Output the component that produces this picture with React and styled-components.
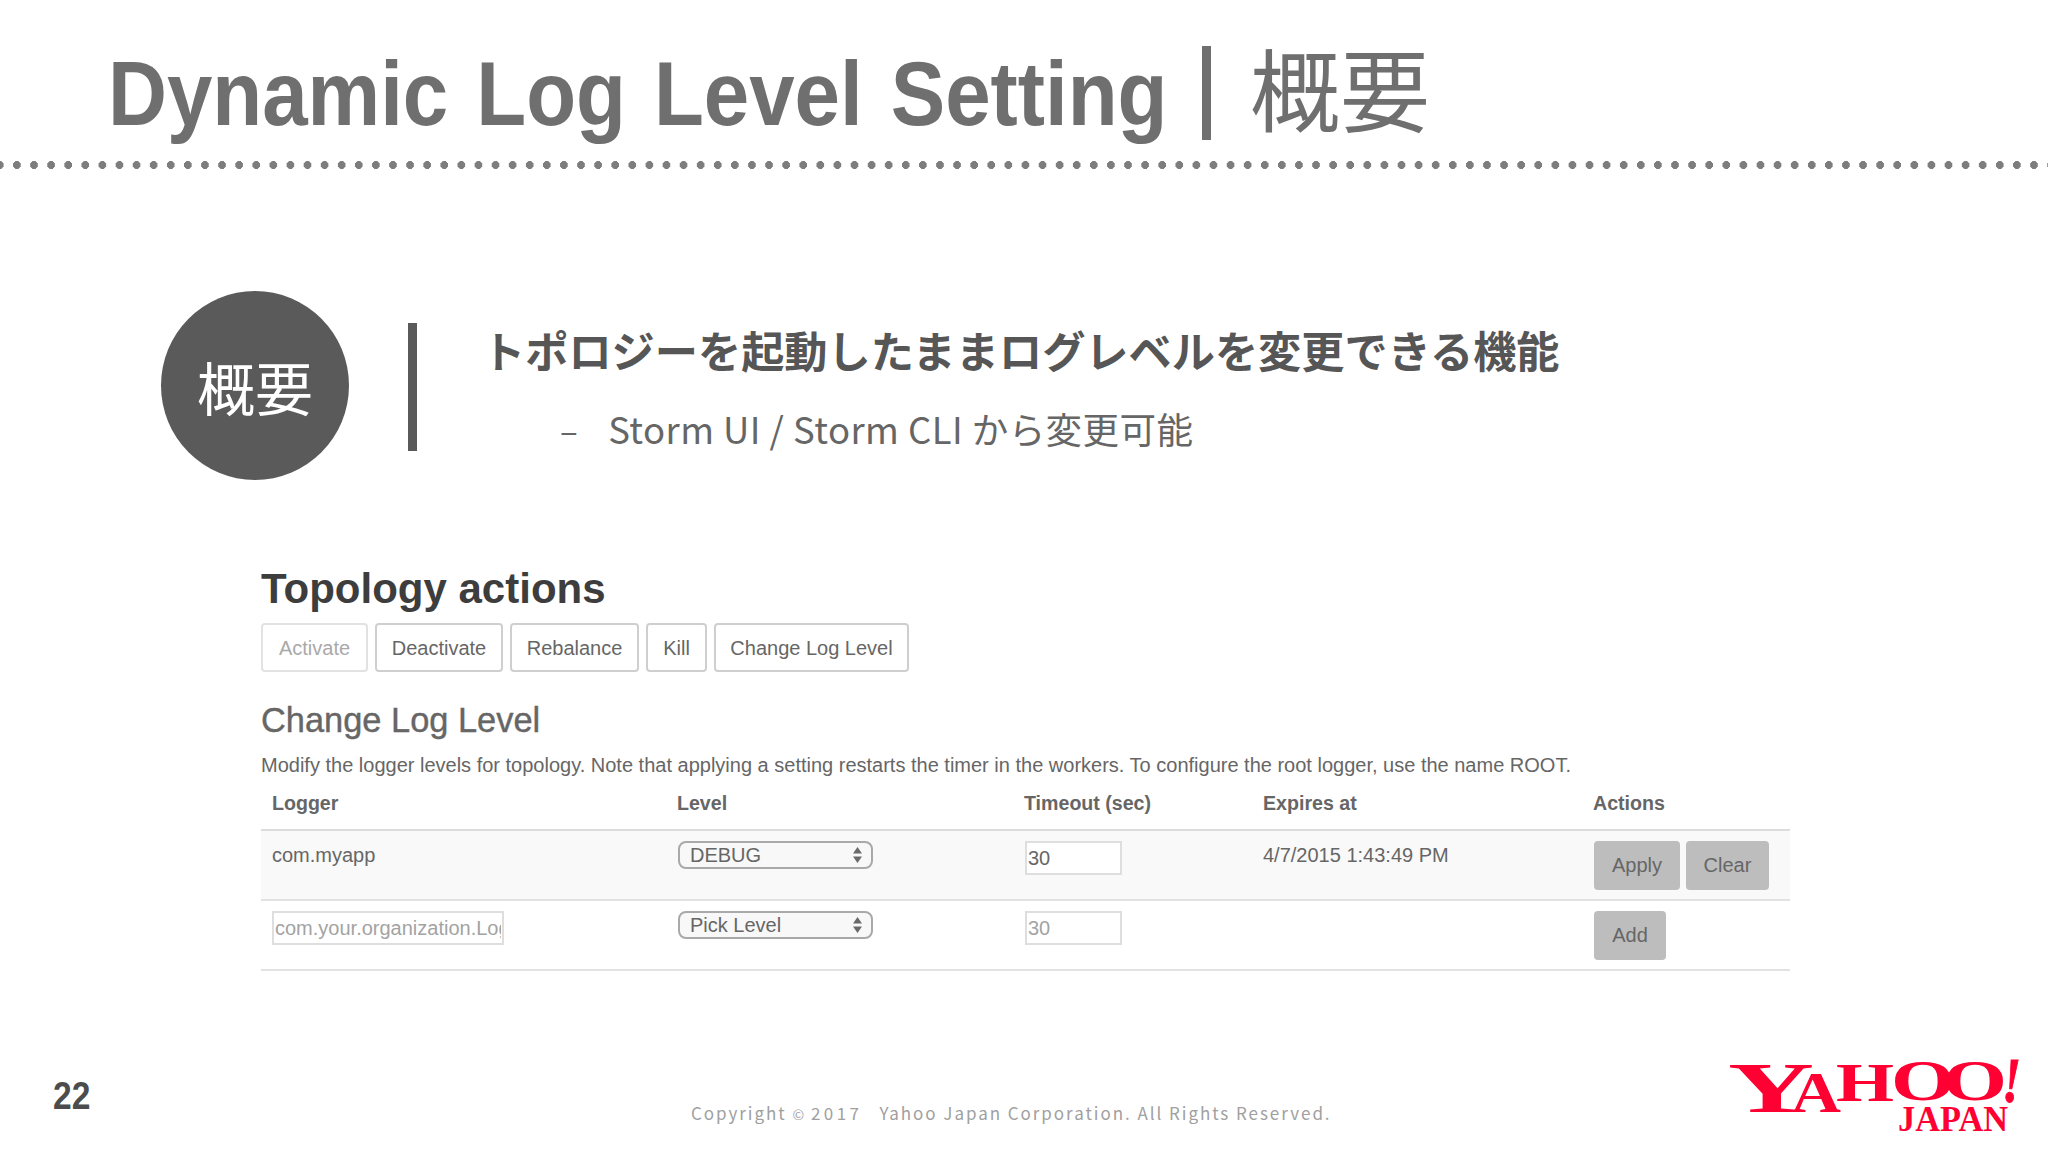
import React from "react";
import styled, { createGlobalStyle } from "styled-components";

const SANS = `"Liberation Sans", Arial, sans-serif`;
const JP = `"Noto Sans CJK JP", "Noto Sans", sans-serif`;

const COLUMNS = "405px 347px 239px 330px 1fr";
const BUTTONS = [
  { label: "Activate", width: 107, disabled: true },
  { label: "Deactivate", width: 128 },
  { label: "Rebalance", width: 129 },
  { label: "Kill", width: 61 },
  { label: "Change Log Level", width: 195 }
];
const HEADERS = ["Logger", "Level", "Timeout (sec)", "Expires at", "Actions"];

const Global = createGlobalStyle`
  html, body { margin: 0; padding: 0; background: #fff; }
  * { box-sizing: border-box; }
`;

const Page = styled.div`
  width: 2048px;
  height: 1152px;
  overflow: hidden;
  display: flex;
  flex-direction: column;
  background: #fff;
`;

const Title = styled.h1`
  margin: 0;
  height: 161px;
  padding: 31px 0 0 108px;
  font: 700 91px/110px ${SANS};
  color: #6f6f6f;
  white-space: nowrap;
`;

const TitleLatin = styled.span`
  display: inline-block;
  transform: scaleX(0.897);
  transform-origin: left center;
  margin-right: -121px;
  word-spacing: 6px;
`;

const TitleBar = styled.span`
  display: inline-block;
  width: 9px;
  height: 94px;
  margin: 0 39px 0 34px;
  background: #6f6f6f;
  vertical-align: -15px;
`;

const TitleJp = styled.span`
  font: 400 90px/110px ${JP};
`;

const Dots = styled.div`
  height: 8px;
  background-image: radial-gradient(ellipse 4px 4px at 4px 4px, #7d7d7d 96%, transparent 100%);
  background-size: 17.1px 8px;
  background-position: -4px 0;
  background-repeat: repeat-x;
`;

const Overview = styled.section`
  margin-top: 122px;
  padding-left: 161px;
  display: flex;
  align-items: center;
`;

const Circle = styled.div`
  width: 188px;
  height: 189px;
  border-radius: 50%;
  background: #5a5a5a;
  color: #fff;
  display: flex;
  align-items: center;
  justify-content: center;
  font: 400 58px/1 ${JP};
`;

const Bar = styled.div`
  width: 9px;
  height: 128px;
  margin: 2px 0 0 59px;
  background: #5a5a5a;
`;

const OverviewText = styled.div`
  margin-left: 65px;
  display: flex;
  flex-direction: column;
  gap: 25px;
`;

const Lead = styled.div`
  font: 700 43.2px/62px ${JP};
  color: #565656;
  white-space: nowrap;
`;

const Sub = styled.div`
  display: flex;
  padding-left: 78px;
  gap: 30px;
  font: 400 36.5px/48px ${JP};
  letter-spacing: 0.45px;
  color: #666;
  white-space: nowrap;
`;

const Dash = styled.span`
  font-size: 33px;
`;

const Panel = styled.section`
  margin: 86px 0 0 261px;
  width: 1529px;
`;

const PanelTitle = styled.h2`
  margin: 0;
  font: 700 42px/46px ${SANS};
  color: #3d3d3d;
`;

const ButtonRow = styled.div`
  display: flex;
  gap: 7px;
  margin-top: 11px;
`;

const ActionButton = styled.button`
  width: ${p => p.$width}px;
  height: 49px;
  padding: 0;
  background: #fff;
  border: 2px solid ${p => (p.disabled ? "#e2e2e2" : "#cfcfcf")};
  border-radius: 4px;
  font: 400 20px/1 ${SANS};
  color: ${p => (p.disabled ? "#a9a9a9" : "#666")};
`;

const SectionTitle = styled.h3`
  margin: 28px 0 0;
  font: 400 34.4px/40px ${SANS};
  -webkit-text-stroke: 0.4px #666;
  color: #666;
`;

const Description = styled.p`
  margin: 13px 0 0;
  font: 400 20px/24px ${SANS};
  color: #666;
  white-space: nowrap;
`;

const Row = styled.div`
  display: grid;
  grid-template-columns: ${COLUMNS};
  height: ${p => p.$height}px;
  padding-left: 11px;
  background: ${p => (p.$shaded ? "#f9f9f9" : "#fff")};
  border-bottom: 2px solid #e2e2e2;
`;

const HeadRow = styled(Row)`
  align-items: center;
  border-bottom-color: #dcdcdc;
`;

const HeadCell = styled.div`
  font: 700 19.6px/24px ${SANS};
  color: #666;
`;

const Cell = styled.div`
  padding-top: 10px;
  font: 400 20px/24px ${SANS};
  color: #666;
`;

const TextCell = styled(Cell)`
  padding-top: 12px;
`;

const Select = styled.div`
  width: 195px;
  height: 28px;
  padding: 0 9px 0 10px;
  margin-left: 1px;
  display: flex;
  align-items: center;
  justify-content: space-between;
  border: 2px solid #a9a9a9;
  border-radius: 8px;
  background: #f8f8f8;
  font: 400 20px/1 ${SANS};
  color: #666;
`;

const Field = styled.input`
  display: block;
  width: ${p => p.$width}px;
  height: 34px;
  margin-left: ${p => p.$inset || 0}px;
  padding: 0 1px;
  background: #fff;
  border: 2px solid #dedede;
  border-radius: 0;
  outline: none;
  font: 400 20px/1 ${SANS};
  color: #666;
  &::placeholder { color: #a3a3a3; opacity: 1; }
`;

const ButtonCell = styled(Cell)`
  display: flex;
  gap: 6px;
  padding-left: 1px;
`;

const GreyButton = styled.button`
  width: ${p => p.$width}px;
  height: 49px;
  padding: 0 0 2px;
  background: #bdbdbd;
  border: 0;
  border-radius: 4px;
  font: 400 20px/1 ${SANS};
  color: #666;
`;

const Footer = styled.footer`
  margin-top: auto;
  height: 122px;
  display: grid;
  grid-template-columns: 691px 1037px 1fr;
`;

const PageNumber = styled.div`
  margin: 46px 0 0 53px;
  font: 700 39px/40px ${SANS};
  color: #4c4c4c;
  transform: scaleX(0.86);
  transform-origin: left center;
`;

const Copyright = styled.div`
  padding-top: 71px;
  font: 400 17px/24px ${JP};
  letter-spacing: 1.95px;
  color: #a0a0a0;
  white-space: nowrap;
`;

const Symbol = styled.span`
  font-size: 14px;
  margin: 0 5px 0 0;
`;

const Year = styled.span`
  letter-spacing: 3.4px;
`;

const LogoWrap = styled.div`
  padding-top: 12px;
`;

const Chevrons = () => (
  <svg width="9" height="16" viewBox="0 0 9 16">
    <path d="M4.5 0 9 6.5H0z M0 9.5h9L4.5 16z" fill="#6a6a6a" />
  </svg>
);

const YahooLogo = () => (
  <svg width="300" height="100" viewBox="0 0 300 100" fontFamily="Liberation Serif, serif" fontWeight="700" fill="#ff0033">
    <text x="0" y="70" fontSize="72" textLength="86" lengthAdjust="spacingAndGlyphs">Y</text>
    <text x="63" y="70" fontSize="58" textLength="50" lengthAdjust="spacingAndGlyphs">A</text>
    <text x="108" y="59" fontSize="54" textLength="58" lengthAdjust="spacingAndGlyphs">H</text>
    <text x="163" y="58" fontSize="56" textLength="64" lengthAdjust="spacingAndGlyphs">O</text>
    <text x="215" y="58" fontSize="56" textLength="64" lengthAdjust="spacingAndGlyphs">O</text>
    <text x="274" y="60" fontSize="64" textLength="19" lengthAdjust="spacingAndGlyphs" fontStyle="italic" stroke="#ff0033" strokeWidth="1">!</text>
    <text x="170" y="89" fontSize="36" textLength="110" lengthAdjust="spacingAndGlyphs">JAPAN</text>
  </svg>
);

export default function App() {
  return (
    <Page>
      <Global />
      <Title>
        <TitleLatin>Dynamic Log Level Setting</TitleLatin>
        <TitleBar />
        <TitleJp>概要</TitleJp>
      </Title>
      <Dots />
      <Overview>
        <Circle>概要</Circle>
        <Bar />
        <OverviewText>
          <Lead>トポロジーを起動したままログレベルを変更できる機能</Lead>
          <Sub>
            <Dash>–</Dash>
            <span>Storm UI / Storm CLI から変更可能</span>
          </Sub>
        </OverviewText>
      </Overview>
      <Panel>
        <PanelTitle>Topology actions</PanelTitle>
        <ButtonRow>
          {BUTTONS.map(b => (
            <ActionButton key={b.label} $width={b.width} disabled={b.disabled}>
              {b.label}
            </ActionButton>
          ))}
        </ButtonRow>
        <SectionTitle>Change Log Level</SectionTitle>
        <Description>
          Modify the logger levels for topology. Note that applying a setting restarts the timer in
          the workers. To configure the root logger, use the name ROOT.
        </Description>
        <HeadRow $height={54}>
          {HEADERS.map(h => (
            <HeadCell key={h}>{h}</HeadCell>
          ))}
        </HeadRow>
        <Row $height={70} $shaded>
          <TextCell>com.myapp</TextCell>
          <Cell>
            <Select>
              DEBUG
              <Chevrons />
            </Select>
          </Cell>
          <Cell>
            <Field $width={97} $inset={1} readOnly value="30" />
          </Cell>
          <TextCell>4/7/2015 1:43:49 PM</TextCell>
          <ButtonCell>
            <GreyButton $width={86}>Apply</GreyButton>
            <GreyButton $width={83}>Clear</GreyButton>
          </ButtonCell>
        </Row>
        <Row $height={70}>
          <Cell>
            <Field $width={232} readOnly placeholder="com.your.organization.LoggerName" />
          </Cell>
          <Cell>
            <Select>
              Pick Level
              <Chevrons />
            </Select>
          </Cell>
          <Cell>
            <Field $width={97} $inset={1} readOnly placeholder="30" />
          </Cell>
          <Cell />
          <ButtonCell>
            <GreyButton $width={72}>Add</GreyButton>
          </ButtonCell>
        </Row>
      </Panel>
      <Footer>
        <PageNumber>22</PageNumber>
        <Copyright>
          Copyright <Symbol>©</Symbol>
          <Year>2017</Year>&nbsp;&nbsp; Yahoo Japan Corporation. All Rights Reserved.
        </Copyright>
        <LogoWrap>
          <YahooLogo />
        </LogoWrap>
      </Footer>
    </Page>
  );
}
